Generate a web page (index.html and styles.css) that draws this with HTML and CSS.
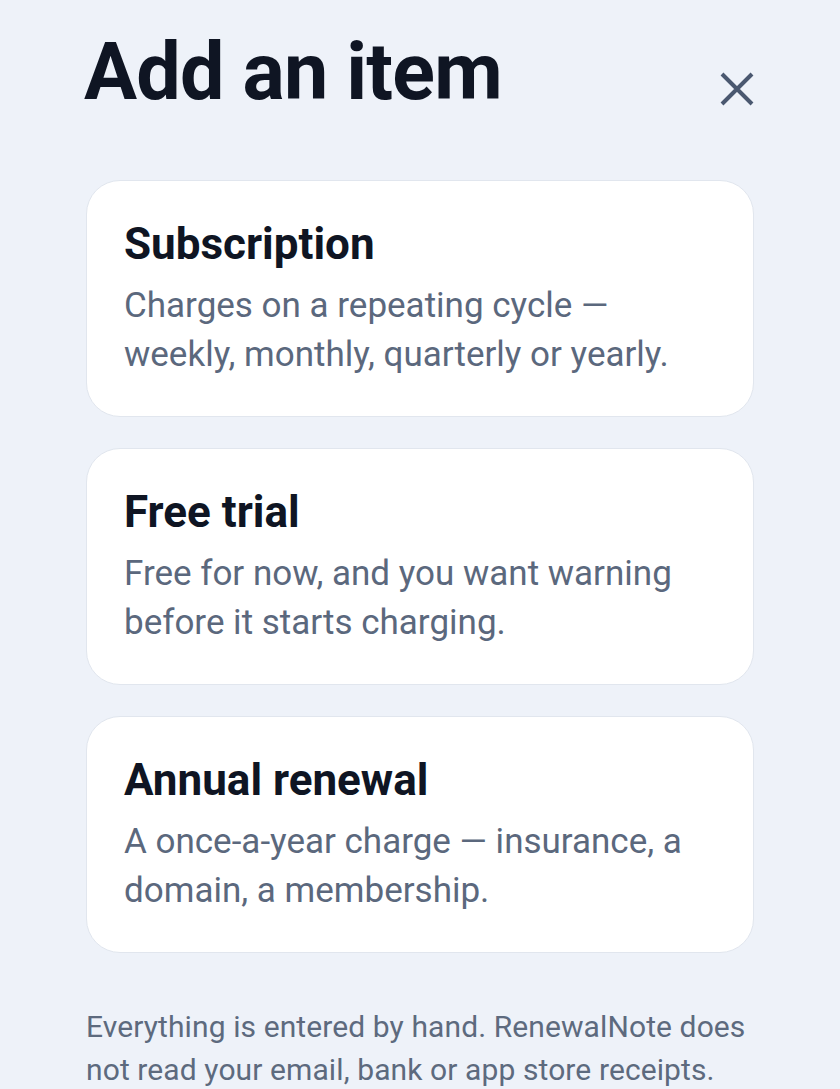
FILE: index.html
```html
<!DOCTYPE html>
<html lang="en">
<head>
<meta charset="utf-8">
<title>Add an item</title>
<link rel="stylesheet" href="styles.css">
</head>
<body>
<div class="sheet">
  <header class="head">
    <h1 class="title">Add an item</h1>
    <button class="close" aria-label="Close">
      <svg viewBox="0 0 34 34" width="34" height="34"><path d="M2 2 L32 32 M32 2 L2 32" stroke="#4a5870" stroke-width="4" stroke-linecap="butt" fill="none"/></svg>
    </button>
  </header>
  <div class="list">
    <div class="card">
      <div class="card-title">Subscription</div>
      <div class="card-desc">Charges on a repeating cycle —<br>weekly, monthly, quarterly or yearly.</div>
    </div>
    <div class="card">
      <div class="card-title">Free trial</div>
      <div class="card-desc">Free for now, and you want warning<br>before it starts charging.</div>
    </div>
    <div class="card">
      <div class="card-title">Annual renewal</div>
      <div class="card-desc">A once-a-year charge — insurance, a<br>domain, a membership.</div>
    </div>
  </div>
  <p class="note">Everything is entered by hand. RenewalNote does<br>not read your email, bank or app store receipts.</p>
</div>
</body>
</html>
```
FILE: styles.css
```css
html, body {
  margin: 0;
  padding: 0;
  background: #eef2f9;
}
body {
  font-family: Roboto, "Noto Sans", sans-serif;
  width: 840px;
  height: 1089px;
  overflow: hidden;
}
.sheet {
  padding: 0 86px;
}
.head {
  display: flex;
  justify-content: space-between;
  align-items: center;
  height: 180px;
}
.title {
  margin: 0 0 0 -2px;
  font-size: 79px;
  font-weight: 700;
  letter-spacing: -0.8px;
  color: #0f1523;
  line-height: 1;
  position: relative;
  top: -18px;
}
.close {
  background: none;
  border: 0;
  padding: 0;
  width: 34px;
  height: 34px;
  display: flex;
  cursor: pointer;
  position: relative;
  top: -1px;
}
.list {
  display: flex;
  flex-direction: column;
  gap: 31px;
}
.card {
  background: #ffffff;
  border: 1px solid #e1e6ee;
  border-radius: 34px;
  padding: 36px 37px 37px;
}
.card-title {
  font-size: 44px;
  font-weight: 700;
  line-height: 55px;
  color: #0f1523;
  margin-bottom: 9px;
}
.card-desc {
  font-size: 35px;
  line-height: 49px;
  color: #5b687d;
}
.note {
  margin: 52px 0 0;
  font-size: 30px;
  line-height: 43px;
  letter-spacing: 0.1px;
  color: #5d6a7e;
  white-space: nowrap;
}
```
